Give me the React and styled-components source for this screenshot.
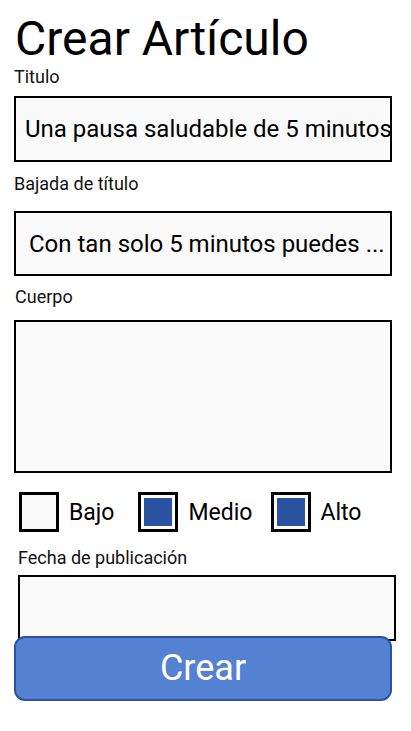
import React from "react";
import styled, { createGlobalStyle } from "styled-components";

const Global = createGlobalStyle`
  html, body { margin: 0; padding: 0; background: #ffffff; }
  body { font-family: Roboto, "Liberation Sans", sans-serif; color: #000; }
`;

const Page = styled.div`
  display: flex;
  flex-direction: column;
  padding: 0 19px 0 14px;
  width: 411px;
  box-sizing: border-box;
`;

const Title = styled.h1`
  margin: 0;
  margin-left: 1px;
  padding-top: 11px;
  font-weight: 400;
  font-size: 48px;
  line-height: 56px;
  height: 56px;
`;

const Label = styled.div`
  font-size: 18px;
  line-height: 20px;
  height: 20px;
  color: #111;
  margin-left: ${(p) => p.$indent || 0}px;
`;

const Field = styled.div`
  box-sizing: border-box;
  width: 378px;
  height: ${(p) => p.$height}px;
  border: 2px solid #000;
  background: #fafafa;
  display: flex;
  align-items: center;
  padding-left: ${(p) => p.$pad || 9}px;
  font-size: 24px;
  white-space: nowrap;
  overflow: hidden;
  margin-top: ${(p) => p.$mt || 0}px;
  margin-left: ${(p) => p.$indent || 0}px;
`;

const Section = styled.div`
  display: flex;
  flex-direction: column;
  margin-top: ${(p) => p.$mt || 0}px;
`;

const CheckRow = styled.div`
  display: flex;
  align-items: center;
  margin-top: 19px;
  margin-left: 5px;
  height: 40px;
`;

const CheckItem = styled.label`
  display: flex;
  align-items: center;
  gap: ${(p) => p.$gap}px;
  margin-right: ${(p) => p.$mr}px;
  font-size: 23px;
`;

const Box = styled.span`
  box-sizing: border-box;
  width: 40px;
  height: 40px;
  border: 3px solid #000;
  padding: 3px;
  background: ${(p) => (p.$checked ? "#fff" : "#fafafa")};
  display: flex;
  &::after {
    content: "";
    flex: 1;
    background: ${(p) => (p.$checked ? "#2b53a1" : "transparent")};
  }
`;

const Button = styled.button`
  box-sizing: border-box;
  width: 378px;
  height: 65px;
  margin-top: -5px;
  position: relative;
  border: 2px solid #2b53a1;
  border-radius: 11px;
  background: #5581d2;
  color: #fff;
  font-family: Roboto, "Liberation Sans", sans-serif;
  font-size: 36px;
  padding: 0 0 2px 0;
  cursor: pointer;
`;

export default function App() {
  return (
    <>
      <Global />
      <Page>
        <Title>Crear Artículo</Title>
        <Label>Titulo</Label>
        <Field $height={66} $mt={9} $pad={9}>Una pausa saludable de 5 minutos</Field>
        <Section $mt={12}>
          <Label>Bajada de título</Label>
          <Field $height={65} $mt={17} $pad={13}>Con tan solo 5 minutos puedes ...</Field>
        </Section>
        <Section $mt={11}>
          <Label $indent={1}>Cuerpo</Label>
          <Field $height={153} $mt={13} />
        </Section>
        <CheckRow>
          <CheckItem $gap={10} $mr={24}>
            <Box />
            Bajo
          </CheckItem>
          <CheckItem $gap={10} $mr={19}>
            <Box $checked />
            Medio
          </CheckItem>
          <CheckItem $gap={9} $mr={0}>
            <Box $checked />
            Alto
          </CheckItem>
        </CheckRow>
        <Section $mt={16}>
          <Label $indent={4}>Fecha de publicación</Label>
          <Field $height={66} $mt={7} $indent={4} />
        </Section>
        <Button>Crear</Button>
      </Page>
    </>
  );
}
